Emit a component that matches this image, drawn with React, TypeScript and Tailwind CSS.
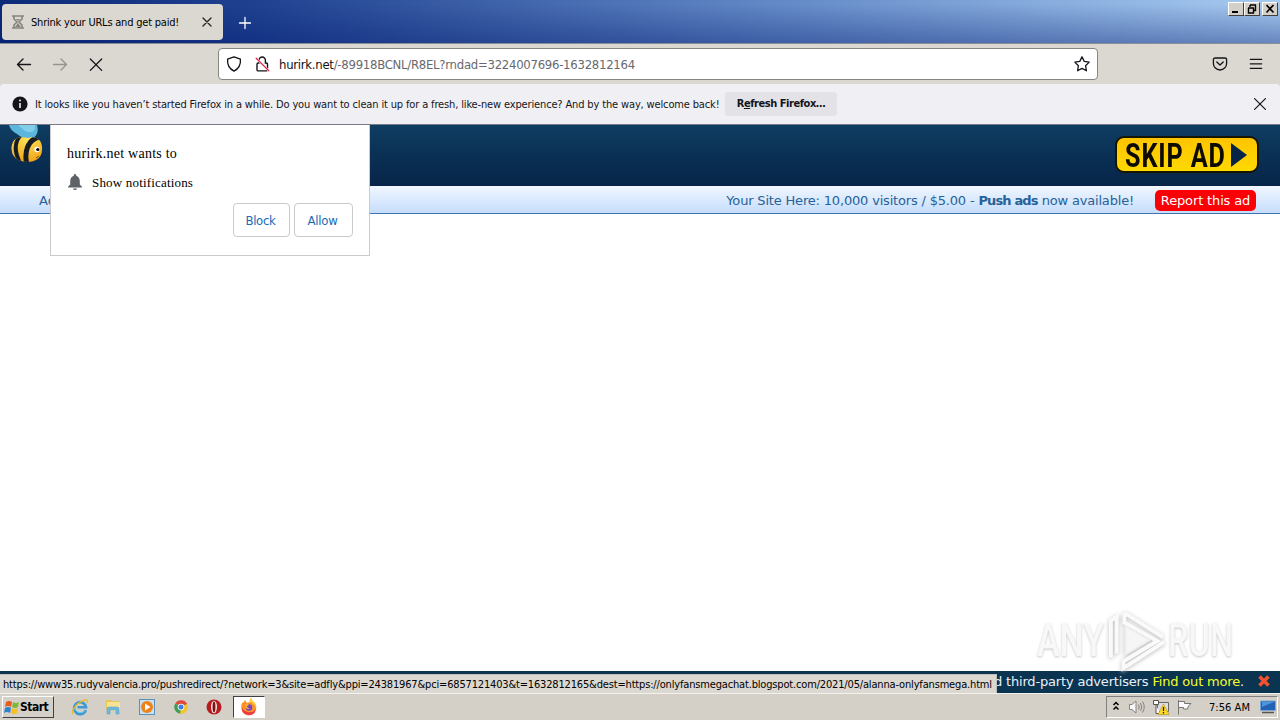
import React from "react";

const tahoma = "font-['DejaVu_Sans_Condensed','DejaVu_Sans',sans-serif] [font-stretch:condensed]";
const verdana = "font-['DejaVu_Sans',sans-serif]";

function Line({ d, className, w = 1.4 }: { d: string; className: string; w?: number }) {
  return (
    <svg viewBox="0 0 16 16" className={className} fill="none" stroke="currentColor" strokeWidth={w} strokeLinecap="round" strokeLinejoin="round">
      <path d={d} />
    </svg>
  );
}

function WinButton({ d, w = 2, className = "" }: { d: string; w?: number; className?: string }) {
  return (
    <div className={`h-[14px] w-4 border border-t-white border-l-white border-r-[#404040] border-b-[#404040] bg-[#d4d0c8] ${className}`}>
      <svg viewBox="0 0 14 12" className="h-3 w-[14px]" fill="none" stroke="#000" strokeWidth={w}>
        <path d={d} />
      </svg>
    </div>
  );
}

function TitleBar() {
  return (
    <header className="flex h-[44px] shrink-0 items-start border-b border-[#8a8d98] bg-[linear-gradient(to_bottom,transparent_10%,rgba(0,25,110,0.38)),linear-gradient(to_right,#0c2a78_0%,#1f4190_20%,#6288c6_60%,#a6caf0_100%)]">
      <div className="mt-1 ml-[2px] flex h-9 w-[221px] items-center rounded-[4px] bg-[#dbd8d1]">
        <svg viewBox="0 0 12 14" className="ml-[10px] h-[14px] w-3" fill="none" stroke="#858480" strokeWidth="1.6">
          <path d="M0 1H12M0 13H12M2 1V4L5 7L2 10V13M10 1V4L7 7L10 10V13" />
          <path d="M4 4H8L6 6ZM6 8L9 12H3Z" fill="#858480" stroke="none" />
        </svg>
        <span className={`ml-[7px] w-[166px] pt-[2px] text-[11px] tracking-[-0.21px] whitespace-nowrap text-black ${tahoma}`}>Shrink your URLs and get paid!</span>
        <Line d="M4 4L12 12M12 4L4 12" className="ml-[2px] h-4 w-4 text-[#222]" w={1.3} />
      </div>
      <Line d="M8 2.5V13.5M2.5 8H13.5" className="mt-[15px] ml-[14px] h-4 w-4 text-white" w={1.3} />
      <div className="mt-[2px] mr-[2px] ml-auto flex">
        <WinButton d="M3 9H9" />
        <WinButton d="M5 2H11M5 2V4M10.5 2V7.5H8M3 5H9M3.5 5V10H8.5V5" w={1.4} />
        <WinButton d="M3.5 2L10.5 9.5M10.5 2L3.5 9.5" w={1.7} className="ml-[2px]" />
      </div>
    </header>
  );
}

function NavBar() {
  return (
    <nav className="flex h-10 shrink-0 items-center bg-[#dbd8d1] text-[#15141a]">
      <Line d="M14.5 8.5H1.5M7 3L1.5 8.5L7 14" className="ml-4 h-4 w-4" />
      <Line d="M1.5 8.5H14.5M9 3L14.5 8.5L9 14" className="ml-5 h-4 w-4 text-[#969490]" />
      <Line d="M2.3 3L13.7 14.4M13.7 3L2.3 14.4" className="ml-5 h-4 w-4" w={1.3} />
      <div className="ml-[114px] flex h-8 w-[880px] items-center rounded-[4px] border border-[#85847f] bg-white">
        <Line d="M8 .9L14.4 3.2C14.9 8.5 12.8 12.6 8 15.1C3.2 12.6 1.1 8.5 1.6 3.2Z" className="ml-[7px] h-4 w-4" w={1.3} />
        <svg viewBox="0 0 16 16" className="ml-3 h-4 w-4" fill="none" stroke="#15141a" strokeWidth="1.4" strokeLinecap="round">
          <path d="M5 7V4.2A3.2 3.2 0 0 1 11.4 4.2V7H12.3A1.2 1.2 0 0 1 13.5 8.2V13.7A1.2 1.2 0 0 1 12.3 14.9H4.2A1.2 1.2 0 0 1 3 13.7V8.2A1.2 1.2 0 0 1 4.2 7Z" />
          <path d="M2.2 2.2L14.8 14.8" stroke="#fff" strokeWidth="2.2" />
          <path d="M2.2 2.2L14.8 14.8" stroke="#e22850" strokeWidth="1.3" />
        </svg>
        <span className={`ml-[9px] pt-[2px] text-[13px] tracking-[-0.27px] whitespace-nowrap text-[#686870] ${tahoma}`}>
          <span className="text-[#111]">hurirk.net</span>/-89918BCNL/R8EL?rndad=3224007696-1632812164
        </span>
        <Line d="M8 .8L10.2 5.4L15.2 6.1L11.6 9.7L12.4 14.8L8 12.4L3.6 14.8L4.4 9.7L.8 6.1L5.8 5.4Z" className="mr-[7px] ml-auto h-4 w-4" w={1.3} />
      </div>
      <Line d="M3 2H13A1.6 1.6 0 0 1 14.6 3.6V7.4A6.6 6.6 0 0 1 1.4 7.4V3.6A1.6 1.6 0 0 1 3 2ZM4.8 6L8 9L11.2 6" className="ml-[114px] h-4 w-4" w={1.3} />
      <Line d="M2.3 3.3H13.7M2.3 7.8H13.7M2.3 12.3H13.7" className="ml-5 h-4 w-4" w={1.3} />
    </nav>
  );
}

function Notice() {
  return (
    <div className="flex h-10 shrink-0 items-center rounded-t-[4px] bg-[#f0f0f4]">
      <svg viewBox="0 0 16 16" className="ml-3 h-4 w-4">
        <circle cx="8" cy="8" r="7.6" fill="#15141a" />
        <path d="M8 7V12" stroke="#fff" strokeWidth="1.5" />
        <circle cx="8" cy="4.5" r=".9" fill="#fff" />
      </svg>
      <span className={`ml-[7px] w-[685px] pt-[2px] text-[11px] tracking-[-0.145px] whitespace-nowrap text-[#15141a] ${tahoma}`}>
        It looks like you haven’t started Firefox in a while. Do you want to clean it up for a fresh, like-new experience? And by the way, welcome back!
      </span>
      <button className={`ml-[5px] h-6 w-28 rounded-[3px] bg-[#e3e3e7] pt-px text-[11px] font-bold tracking-[-0.45px] whitespace-nowrap text-[#15141a] ${tahoma}`}>
        R<span className="underline">e</span>fresh Firefox…
      </button>
      <Line d="M2.6 2.6L13.4 13.4M13.4 2.6L2.6 13.4" className="mr-3 ml-auto h-4 w-4 text-[#15141a]" w={1.2} />
    </div>
  );
}

function Bee() {
  return (
    <svg viewBox="0 0 50 62" className="h-[62px] w-[50px]">
      <defs>
        <radialGradient id="body" cx=".55" cy=".3" r=".8">
          <stop offset="0" stopColor="#ffe45a" />
          <stop offset=".6" stopColor="#f0a91c" />
          <stop offset="1" stopColor="#b86a08" />
        </radialGradient>
        <clipPath id="bee"><path d="M12 20C13 13 20 11 28 13C37 10 43 16 42 25C42 33 35 37 28 37C17 37 10 31 12 20Z" /></clipPath>
      </defs>
      <path d="M9 0H37C39 6 37 12 31 14C26 15 21 12 17 9C13 7 10 4 9 0Z" fill="#5cb5dc" />
      <path d="M18 0H35C36 6 31 9 25 6Z" fill="#8cd4ec" opacity=".8" />
      <g clipPath="url(#bee)">
        <rect width="50" height="45" fill="url(#body)" />
        <path d="M20 11C14 18 15 28 20 38" fill="none" stroke="#161d22" strokeWidth="4" />
        <path d="M39 12C27 15 24 28 27 40" fill="none" stroke="#161d22" strokeWidth="5" />
        <path d="M12 19C10 26 12 31 16 35" fill="none" stroke="#f5d77c" strokeWidth="2" />
      </g>
      <circle cx="37" cy="24.5" r="2.7" fill="#fff" />
      <circle cx="37.8" cy="24.5" r="1.6" fill="#000" />
      <path d="M36 33L39 31" stroke="#8a4b09" strokeWidth="1" />
    </svg>
  );
}

function PermissionPopup() {
  return (
    <div className="absolute top-px left-[50px] h-[131px] w-80 border border-t-0 border-[#cacace] bg-white px-4">
      <p className="mt-5 h-[18px] font-['Liberation_Serif',serif] text-[14px] leading-[18px] tracking-[0.25px] whitespace-nowrap text-black">hurirk.net wants to</p>
      <div className="mt-[10px] flex h-[18px] items-center">
        <svg viewBox="0 0 16 18" className="h-[18px] w-4" fill="#5f6368">
          <path d="M8 1A1.3 1.3 0 0 0 6.8 2.7C4 3.5 3.2 6 3.2 8.5V11.5L1 13.8V14.5H15V13.8L12.8 11.5V8.5C12.8 6 12 3.5 9.2 2.7A1.3 1.3 0 0 0 8 1ZM6 15.4H10A2 1.5 0 0 1 6 15.4Z" />
        </svg>
        <span className="ml-[9px] pt-[2px] font-['Liberation_Serif',serif] text-[13px] tracking-[0.18px] whitespace-nowrap text-black">Show notifications</span>
      </div>
      <div className={`mt-3 flex justify-end gap-1 text-[13px] text-[#1a6bb5] ${tahoma}`}>
        <button className="h-[34px] w-[57px] rounded-[4px] border border-[#cacaca] pt-[2px] pr-[2px] tracking-[-0.3px]">Block</button>
        <button className="h-[34px] w-[59px] rounded-[4px] border border-[#cacaca] pt-[2px] pr-[2px] tracking-[-0.2px]">Allow</button>
      </div>
    </div>
  );
}

function Watermark() {
  return (
    <div className="absolute top-[484px] left-[1037px] flex h-[64px] w-[200px] items-center font-['Roboto',sans-serif] text-[46px] font-medium text-[#f8f8f8] [text-shadow:0_1px_3px_#c4c4c4]">
      <div className="w-[69px] shrink-0"><span className="inline-block origin-left scale-x-[0.74]">ANY</span></div>
      <svg viewBox="0 0 64 64" className="h-[64px] w-[62px] shrink-0 drop-shadow-[0_1px_2px_#bbb]" fill="none" stroke="#fafafa" strokeWidth="4">
        <path d="M5 50V12L11 8V46M19 4L59 29M19 4V14L53 33L18 54V61L60 34" />
        <path d="M20 18V47L45 32Z" fill="#f6f6f6" stroke="#eee" strokeWidth="2" />
      </svg>
      <div className="w-[64px] shrink-0"><span className="inline-block origin-left scale-x-[0.71]">RUN</span></div>
    </div>
  );
}

function Page() {
  return (
    <main className={`relative flex h-[569px] shrink-0 flex-col bg-white ${verdana}`}>
      <div className="flex h-[62px] shrink-0 items-start justify-between border-t border-[#777987] bg-[linear-gradient(#0e3d61,#062448)]">
        <Bee />
        <button className="mt-[11px] mr-[21px] flex h-[37px] w-[144px] items-center rounded-[9px] border-2 border-[#161500] bg-[linear-gradient(#ffc400,#ffd900)] pl-2 text-[#0d0b00]">
          <span className="w-[103px] origin-left scale-x-[0.74] font-['Roboto',sans-serif] text-[34px] leading-8 font-bold tracking-[1.2px] whitespace-nowrap">SKIP AD</span>
          <svg viewBox="0 0 18 26" className="ml-[2px] h-[26px] w-[18px]" fill="#062448"><path d="M1 1L17 13L1 25Z" /></svg>
        </button>
      </div>
      <div className="flex h-7 shrink-0 items-center border-b border-[#3f74ac] bg-[linear-gradient(#f0f7ff,#c6ddfc)] text-[13px] whitespace-nowrap text-[#286197]">
        <span className="ml-[39px] w-[11px] overflow-hidden pt-[2px]">Ad</span>
        <span className="mr-[21px] ml-auto pt-[2px] tracking-[-0.18px]">Your Site Here: 10,000 visitors / $5.00 - <b className="tracking-[-0.85px]">Push ads</b> now available!</span>
        <button className="mt-[2px] mr-6 h-[21px] w-[101px] rounded-[5px] bg-[#fb0007] text-[13px] tracking-[-0.14px] text-white">Report this ad</button>
      </div>
      <PermissionPopup />
      <Watermark />
      <footer className="mt-auto flex h-[22px] shrink-0 items-center justify-end bg-[#0b3450] text-[13px] whitespace-nowrap text-[#e8f1f8]">
        <span className="tracking-[-0.17px]">d third-party advertisers <span className="text-[#f4ff2b]">Find out more</span>.</span>
        <svg viewBox="0 0 12 12" className="mr-[10px] mb-[3px] ml-[14px] h-3 w-3" stroke="#f2512f" strokeWidth="3.6"><path d="M1.5 1.5L10.5 10.5M10.5 1.5L1.5 10.5" /></svg>
      </footer>
      <div className={`absolute bottom-0 left-0 flex h-[19px] w-[997px] items-center border-t border-r border-[#c2bfb8] bg-[#dbd8d1] pt-[2px] pl-[3px] text-[11px] tracking-[-0.166px] whitespace-nowrap text-black ${tahoma}`}>
        https://www35.rudyvalencia.pro/pushredirect/?network=3&amp;site=adfly&amp;ppi=24381967&amp;pci=6857121403&amp;t=1632812165&amp;dest=https://onlyfansmegachat.blogspot.com/2021/05/alanna-onlyfansmega.html
      </div>
    </main>
  );
}

function Taskbar() {
  return (
    <div className={`flex h-[27px] shrink-0 items-center border-t border-[#f3f1ed] bg-[#d4d0c8] text-[11px] text-black ${tahoma}`}>
      <button className="ml-[2px] flex h-[22px] w-[52px] items-center border border-t-white border-l-white border-r-[#404040] border-b-[#404040] pl-[1px] text-[12px] font-bold tracking-[-0.5px]">
        <svg viewBox="0 0 16 16" className="h-4 w-4 shrink-0">
          <path d="M2 3Q5 1 8 3L7 8Q4 6 1 8Z" fill="#e75b22" />
          <path d="M9 3Q12 5 15 3L14 8Q11 10 8 8Z" fill="#7bb83c" />
          <path d="M1 9Q4 7 7 9L6 14Q3 12 0 14Z" fill="#2d82cf" />
          <path d="M8 9Q11 11 14 9L13 14Q10 16 7 14Z" fill="#f6bf26" />
        </svg>
        Start
      </button>
      <svg viewBox="0 0 18 18" className="ml-[17px] h-[18px] w-[18px]" fill="none">
        <path d="M14.8 12A6 6 0 1 1 15 9.2H6.5" stroke="#3a9ad5" strokeWidth="2.6" />
        <path d="M14.5 12A6 6 0 0 1 4 11" stroke="#76c6ec" strokeWidth="1" />
        <path d="M2 16C-.5 13 6 4 14 2C17 1.5 17 3 16 5" stroke="#e9b930" strokeWidth="1.4" />
      </svg>
      <svg viewBox="0 0 18 18" className="ml-[15px] h-[18px] w-[18px]">
        <path d="M2 2H7L8 3H15V12H2Z" fill="#e8c45b" />
        <path d="M3 4H16V13H3Z" fill="#f8e394" />
        <path d="M3 16V11Q3 9 5 9H13Q15 9 15 11V16H12V12H6V16Z" fill="#70b8dc" stroke="#5298c0" strokeWidth=".5" />
      </svg>
      <svg viewBox="0 0 18 18" className="ml-4 h-[18px] w-[18px]">
        <rect x="1.5" y="1.5" width="15" height="15" fill="#c7e1f4" stroke="#5c91ba" />
        <circle cx="9" cy="9" r="6" fill="#ee8219" />
        <path d="M7 5.5L12.5 9L7 12.5Z" fill="#fff" />
      </svg>
      <svg viewBox="0 0 18 18" className="ml-4 h-[18px] w-[18px]">
        <path d="M9 9L3.2 5.5A6.8 6.8 0 0 1 15.2 6Z" fill="#df4937" />
        <path d="M9 9V15.8A6.8 6.8 0 0 1 3.2 5.5Z" fill="#3b9e54" />
        <path d="M9 9L15.2 6A6.8 6.8 0 0 1 8 15.8Z" fill="#f3c52d" />
        <circle cx="9" cy="9" r="3.3" fill="#fff" /><circle cx="9" cy="9" r="2.5" fill="#397fe1" />
      </svg>
      <svg viewBox="0 0 18 18" className="ml-[15px] h-[18px] w-[18px]">
        <circle cx="9" cy="9" r="7.5" fill="#b71b1d" />
        <ellipse cx="9" cy="9" rx="3" ry="6.3" fill="#ece3df" />
        <ellipse cx="9" cy="9" rx="1.4" ry="5.4" fill="#80100f" />
      </svg>
      <div className="ml-[10px] flex h-[22px] w-8 items-center justify-center border border-t-[#404040] border-l-[#404040] border-r-white border-b-white bg-white">
        <svg viewBox="0 0 18 18" className="h-[18px] w-[18px]">
          <path d="M2 5L4 4L5 2L7 5L10 4Q9 2 11 0Q12 3 14 4Q17 7 16 11A7.3 7.3 0 0 1 1.5 11Q1 7 2 5Z" fill="#ff9028" />
          <path d="M1.5 9Q2 17 9 17Q15 17 16 11Q13 15 8 14Q3 13 1.5 9Z" fill="#ee3b43" />
          <path d="M11 0Q12 3 14 4Q17 7 16 10Q14 5 10 4Q9 2 11 0Z" fill="#ffd439" />
          <circle cx="9" cy="9.5" r="3.2" fill="#7046c7" />
          <path d="M5 6Q8 5 9 7L7 8Q7 10 10 10Q8 12 6 10Z" fill="#ffad2b" />
        </svg>
      </div>
      <div className="mr-[2px] ml-auto flex h-[22px] w-[172px] items-center border border-t-[#808080] border-l-[#808080] border-r-white border-b-white">
        <svg viewBox="0 0 8 12" className="ml-[5px] h-3 w-2" fill="none" stroke="#000" strokeWidth="1.5"><path d="M1.5 4L4 1.5L6.5 4M1.5 8.5L4 6L6.5 8.5" /></svg>
        <svg viewBox="0 0 18 16" className="ml-2 h-4 w-[18px]" fill="none" stroke="#85847f"><path d="M1.5 5.5H4L8 2V14L4 10.5H1.5Z" fill="#f8f8f8" /><path d="M10.5 5.5Q12 8 10.5 10.5M12.5 4Q15 8 12.5 12M14.5 2.5Q18 8 14.5 13.5" /></svg>
        <svg viewBox="0 0 18 16" className="ml-[6px] h-4 w-[18px]" fill="none"><path d="M5.5 3.5H16.5V12.5H5.5Z" fill="#ddd" stroke="#666" /><path d="M1.5 1.5H6.5V5.5H1.5ZM4 6V14.5H8" fill="#fff" stroke="#555" /><path d="M11.5 5L17 15.5H6Z" fill="#ffda26" stroke="#b29116" strokeWidth=".6" /><path d="M11.5 8V12M11.5 13V14.4" stroke="#222" strokeWidth="1.3" /></svg>
        <svg viewBox="0 0 18 16" className="ml-[6px] h-4 w-[18px]"><path d="M2.5 1V15.5M2.5 2.5H8.5V4.5H15L12.5 7L11.5 10H7.5V8.5H2.5" fill="#fafafa" stroke="#777" /></svg>
        <span className="ml-[15px] w-[42px] pt-[2px] tracking-[0.05px] whitespace-nowrap">7:56 AM</span>
        <svg viewBox="0 0 16 14" className="ml-[9px] h-[14px] w-4"><path d="M.5 1H15.5V10.5H.5Z" fill="#2361b4" stroke="#78a8d6" /><path d="M2 2H14L2 7Z" fill="#4d94dc" /><path d="M2 12.5H14" stroke="#555" strokeWidth="1.5" /></svg>
      </div>
    </div>
  );
}

export default function App() {
  return (
    <div className="flex h-[720px] w-[1280px] flex-col overflow-hidden bg-[#dbd8d1]">
      <TitleBar />
      <NavBar />
      <Notice />
      <Page />
      <Taskbar />
    </div>
  );
}
